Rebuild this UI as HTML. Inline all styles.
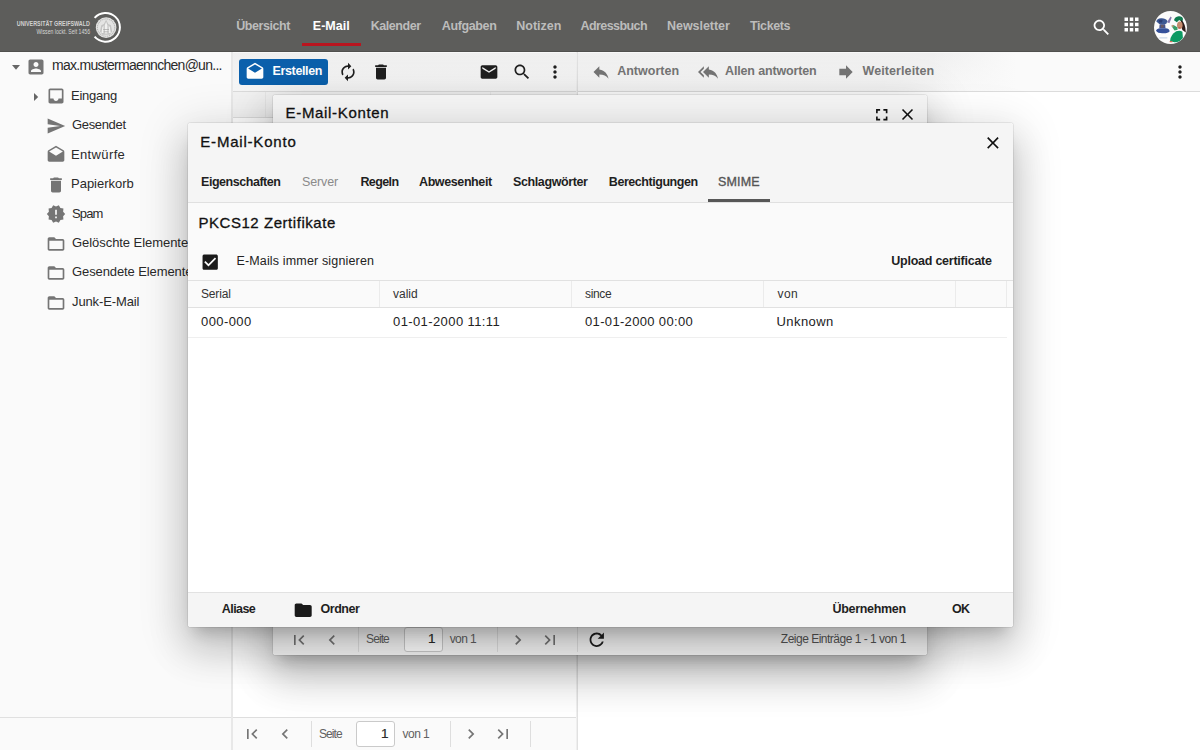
<!DOCTYPE html>
<html lang="de">
<head>
<meta charset="utf-8">
<title>E-Mail - Group-Office</title>
<style>
*{box-sizing:border-box;margin:0;padding:0}
html,body{width:1200px;height:750px;overflow:hidden;background:#fff}
body{position:relative;font-family:"Liberation Sans", sans-serif;font-size:13px;color:#212121;-webkit-font-smoothing:antialiased}
.abs,.t,.ic{position:absolute}
.t{white-space:nowrap;display:block;font-weight:400;font-style:normal}
.ic{display:block;overflow:visible}
ul{list-style:none}
a{color:inherit;text-decoration:none}
#hdr{position:absolute;left:0;top:0;width:1200px;height:52px;background:#5d5d5b;overflow:hidden;border-bottom:1px solid #50504e}
#side{position:absolute;left:0;top:52px;width:233px;height:698px;background:#fafafa;border-right:2px solid #e8e8e8}
#side .foot{position:absolute;left:0;top:665px;width:231px;height:33px;border-top:1px solid #e0e0e0}
#center{position:absolute;left:233px;top:52px;width:343px;height:698px;background:#fff}
#vsplit{position:absolute;left:576px;top:52px;width:2px;height:698px;background:linear-gradient(to right,#efefef 0,#efefef 1px,#e1e1e1 1px,#e1e1e1 2px)}
#right{position:absolute;left:578px;top:52px;width:622px;height:698px;background:#fff}
.tb{position:absolute;left:0;top:0;width:100%;height:40px;background:linear-gradient(to bottom,#efefef,#f7f7f7);border-bottom:1px solid #dcdcdc;border-top:1px solid #f8f8f8}
#right .tb{background:linear-gradient(to right,rgba(250,250,250,0) 354px,#fafafa 439px),linear-gradient(to bottom,#efefef,#f7f7f7)}
.sep{position:absolute;width:1px;background:#dedede}
.shadow{box-shadow:0 0 0 1px rgba(0,0,0,.07),0 11px 15px -7px rgba(0,0,0,.2),0 24px 38px 3px rgba(0,0,0,.14),0 9px 46px 8px rgba(0,0,0,.12)}
#win1{position:absolute;left:272.5px;top:95px;width:654.5px;height:560px;background:#fff;border-radius:3px;overflow:hidden}
#win1w{position:absolute;left:272.5px;top:95px;width:654.5px;height:560px;border-radius:3px}
#win2w{position:absolute;left:187.5px;top:123px;width:825px;height:503.5px;border-radius:3px}
#win2{position:absolute;left:187.5px;top:123px;width:825px;height:503.5px;background:#fff;border-radius:3px;overflow:hidden}
</style>
</head>
<body>
<header id="hdr">
<svg class="abs" style="left:0;top:0" width="140" height="52" viewBox="0 0 140 52"><text x="16.8" y="25.8" font-size="7.2" font-weight="700" fill="#d2d2d1" textLength="73" lengthAdjust="spacingAndGlyphs" font-family='"Liberation Sans",sans-serif'>UNIVERSITÄT GREIFSWALD</text><text x="36.5" y="33.6" font-size="6.4" fill="#d6d6d5" textLength="53.5" lengthAdjust="spacingAndGlyphs" font-family='"Liberation Sans",sans-serif'>Wissen lockt. Seit 1456</text><path d="M94.6 17.9 A14.4 14.4 0 1 1 94.6 36.7" fill="none" stroke="#fff" stroke-width="2"/><circle cx="106.1" cy="27.6" r="10.3" fill="#e4e4e3"/><circle cx="106.1" cy="27.6" r="8.7" fill="none" stroke="#b9b9b8" stroke-width="1.1" stroke-dasharray="1.2 0.7"/><path d="M106.1 19.8 l2.2 4.2 2.6 1.2 1.3 6.300 -2.400 3.300 h-7.400 l-2.400-3.300 1.300-6.300 2.600-1.200z" fill="#c4c4c3"/><path d="M106.1 21.8 l1.300 3.400 v8.300 h-2.600 v-8.300z M102.300 27.200 l1.200-1.700 v7.500 h-2z M109.900 27.200 l-1.200-1.700 v7.500 h2z" fill="#f1f1f0"/><path d="M103.200 29.500 h5.800 M103.600 31.800 h5" stroke="#a5a5a4" stroke-width=".7"/></svg>
<nav>
<a class="t" style="left:236.30px;top:19.75px;font-size:12.5px;line-height:12.5px;font-weight:700;color:#bcbcbb;letter-spacing:-0.449px;">Übersicht</a>
<a class="t" style="left:312.80px;top:19.75px;font-size:12.5px;line-height:12.5px;font-weight:700;color:#ffffff;letter-spacing:0.013px;">E-Mail</a>
<a class="t" style="left:370.80px;top:19.75px;font-size:12.5px;line-height:12.5px;font-weight:700;color:#bcbcbb;letter-spacing:-0.461px;">Kalender</a>
<a class="t" style="left:441.80px;top:19.75px;font-size:12.5px;line-height:12.5px;font-weight:700;color:#bcbcbb;letter-spacing:-0.371px;">Aufgaben</a>
<a class="t" style="left:516.30px;top:19.75px;font-size:12.5px;line-height:12.5px;font-weight:700;color:#bcbcbb;letter-spacing:-0.017px;">Notizen</a>
<a class="t" style="left:580.50px;top:19.75px;font-size:12.5px;line-height:12.5px;font-weight:700;color:#bcbcbb;letter-spacing:-0.567px;">Adressbuch</a>
<a class="t" style="left:667.00px;top:19.75px;font-size:12.5px;line-height:12.5px;font-weight:700;color:#bcbcbb;letter-spacing:-0.040px;">Newsletter</a>
<a class="t" style="left:750.00px;top:19.75px;font-size:12.5px;line-height:12.5px;font-weight:700;color:#bcbcbb;letter-spacing:-0.400px;">Tickets</a>
<div class="abs" style="left:302px;top:43.3px;width:59px;height:2.7px;background:#b9151f"></div>
</nav>
<svg class="ic" style="left:1091.10px;top:17.10px;width:21px;height:21px;fill:#fff;" viewBox="0 0 24 24"><path d="M15.5 14h-.79l-.28-.27C15.41 12.59 16 11.11 16 9.5 16 5.91 13.09 3 9.5 3S3 5.91 3 9.5 5.91 16 9.5 16c1.61 0 3.09-.59 4.23-1.57l.27.28v.79l5 4.99L20.49 19l-4.99-5zm-6 0C7.01 14 5 11.99 5 9.5S7.01 5 9.5 5 14 7.01 14 9.5 11.99 14 9.5 14z"/></svg>
<svg class="ic" style="left:1120.50px;top:14.40px;width:21px;height:21px;fill:#fff;" viewBox="0 0 24 24"><path d="M4 8h4V4H4v4zm6 12h4v-4h-4v4zm-6 0h4v-4H4v4zm0-6h4v-4H4v4zm6 0h4v-4h-4v4zm6-10v4h4V4h-4zm-6 4h4V4h-4v4zm6 6h4v-4h-4v4zm0 6h4v-4h-4v4z"/></svg>
<svg class="abs" style="left:1154px;top:11px" width="33" height="33" viewBox="0 0 33 33"><defs><clipPath id="avc"><circle cx="16.5" cy="16.5" r="16.5"/></clipPath></defs><g clip-path="url(#avc)"><rect width="33" height="33" fill="#fcfcfc"/><path d="M13 11.200 L16.600 5.600 l1.100 1 -2.300 5.600z" fill="#8577ad"/><path d="M2.300 10.500 q.5-3 4.700-3.200 q4.500-.3 6.500 2.700 l-1.200 2.800 q-3 1.200-7 .3z" fill="#3d5893"/><path d="M4.500 9.500 q2-1.200 4.200-.2 l-.8 2.200 h-2.600z" fill="#2b3c73"/><path d="M5.600 13.200 h5.600 l.3 4 h-6.200z" fill="#47528a"/><path d="M7 14 h2.600 v2.400 h-2.600z" fill="#6a5a5e"/><path d="M2 19.800 q.8-2.800 4.800-2.600 h4.800 q3.600.2 4.100 3 q-1.800 2.300-6.800 2.100 q-5.200.200-6.900-2.500z" fill="#34509a"/><path d="M5.300 26.200 h8 v1.400 h-8z" fill="#cbd8e9"/><path d="M20 9.300 q.6-3.400 4.700-4 q3.700-.3 4.300 2.800 l-.6 3.200 -3.200-2.400 -2.400 2.400z" fill="#107b50"/><path d="M27.200 8.800 q4.300 3.600 4.600 12.600 l-3.400-2.400 -1.800-5.600z" fill="#2d1b19"/><ellipse cx="25.800" cy="14.200" rx="2.800" ry="3.800" fill="#c58b6d"/><path d="M24.400 16.500 h2 v.8 h-2z" fill="#b5413c"/><path d="M17.500 15 l2-1 3.800 2.200 .4 2.600 -3.200.6z" fill="#3a9d68"/><path d="M17.300 14.600 l1.600-.9 1 1.600 -1.500.8z" fill="#d09a7c"/><path d="M22.200 20.300 q3.600-1.400 6.200.4 l.5 6.300 q-3 4.200-8.200 4.300 l-4.700-1.100 q.4-6.500 6.200-9.900z" fill="#0d9a63"/><path d="M15.700 30 h2.600 v1.300 h-2.600z" fill="#d4705a"/></g></svg>
</header>
<aside id="side"><div class="foot"></div></aside>
<ul>
<li>
<svg class="ic" style="left:12.2px;top:64.8px;width:8px;height:4.7px;fill:#666" viewBox="0 0 8 4.7"><path d="M0 0h8L4 4.700z"/></svg>
<svg class="ic" style="left:26.10px;top:56.90px;width:20px;height:20px;fill:#757575;" viewBox="0 0 24 24"><path d="M3 5v14c0 1.100.89 2 2 2h14c1.100 0 2-.9 2-2V5c0-1.100-.9-2-2-2H5c-1.110 0-2 .9-2 2zm12 4c0 1.660-1.340 3-3 3s-3-1.340-3-3 1.340-3 3-3 3 1.340 3 3zm-9 8c0-2 4-3.100 6-3.100s6 1.100 6 3.100v1H6v-1z"/></svg>
<span class="t" style="left:52.00px;top:58.00px;font-size:14px;line-height:14px;color:#2a2a2a;letter-spacing:-0.719px;">max.mustermaennchen@un...</span>
</li>
<li>
<svg class="ic" style="left:33.6px;top:93px;width:4.2px;height:8px;fill:#666" viewBox="0 0 4.2 8"><path d="M0 0v8l4.200-4z"/></svg>
<svg class="ic" style="left:45.80px;top:86.45px;width:20px;height:20px;fill:#757575;" viewBox="0 0 24 24"><path d="M19 3H4.990c-1.110 0-1.980.9-1.980 2L3 19c0 1.100.88 2 1.990 2H19c1.100 0 2-.9 2-2V5c0-1.100-.9-2-2-2zm0 12h-4c0 1.660-1.350 3-3 3s-3-1.340-3-3H4.990V5H19v10z"/></svg>
<span class="t" style="left:71.00px;top:89.00px;font-size:13px;line-height:13px;color:#2a2a2a;letter-spacing:-0.247px;">Eingang</span>
</li>
<li>
<svg class="ic" style="left:45.80px;top:115.90px;width:20px;height:20px;fill:#757575;" viewBox="0 0 24 24"><path d="M2.010 21L23 12 2.010 3 2 10l15 2-15 2z"/></svg>
<span class="t" style="left:72.00px;top:118.00px;font-size:13px;line-height:13px;color:#2a2a2a;letter-spacing:-0.337px;">Gesendet</span>
</li>
<li>
<svg class="ic" style="left:45.80px;top:145.35px;width:20px;height:20px;fill:#757575;" viewBox="0 0 24 24"><path d="M21.99 8c0-.72-.37-1.35-.94-1.7L12 1 2.95 6.3C2.38 6.65 2 7.28 2 8v10c0 1.1.9 2 2 2h16c1.1 0 2-.9 2-2l-.01-10zM12 13L3.74 7.84 12 3l8.26 4.84L12 13z"/></svg>
<span class="t" style="left:71.00px;top:148.00px;font-size:13px;line-height:13px;color:#2a2a2a;letter-spacing:0.361px;">Entwürfe</span>
</li>
<li>
<svg class="ic" style="left:45.80px;top:174.80px;width:20px;height:20px;fill:#757575;" viewBox="0 0 24 24"><path d="M6 19c0 1.1.9 2 2 2h8c1.1 0 2-.9 2-2V7H6v12zM19 4h-3.5l-1-1h-5l-1 1H5v2h14V4z"/></svg>
<span class="t" style="left:71.00px;top:177.00px;font-size:13px;line-height:13px;color:#2a2a2a;letter-spacing:-0.004px;">Papierkorb</span>
</li>
<li>
<svg class="ic" style="left:45.80px;top:204.25px;width:20px;height:20px;fill:#757575;" viewBox="0 0 24 24"><path d="M23 12l-2.440-2.780.34-3.680-3.610-.82-1.890-3.180L12 3 8.600 1.540 6.710 4.720l-3.610.81.34 3.680L1 12l2.440 2.780-.34 3.690 3.610.82 1.890 3.180L12 21l3.400 1.460 1.890-3.180 3.610-.82-.34-3.680L23 12zm-10 5h-2v-2h2v2zm0-4h-2V7h2v6z"/></svg>
<span class="t" style="left:72.00px;top:207.00px;font-size:13px;line-height:13px;color:#2a2a2a;letter-spacing:-0.844px;">Spam</span>
</li>
<li>
<svg class="ic" style="left:45.80px;top:233.70px;width:20px;height:20px;fill:#757575;" viewBox="0 0 24 24"><path d="M20 6h-8l-2-2H4c-1.100 0-1.990.9-1.990 2L2 18c0 1.100.9 2 2 2h16c1.100 0 2-.9 2-2V8c0-1.100-.9-2-2-2zm0 12H4V8h16v10z"/></svg>
<span class="t" style="left:72.00px;top:236.00px;font-size:13px;line-height:13px;color:#2a2a2a;letter-spacing:-0.055px;">Gelöschte Elemente</span>
</li>
<li>
<svg class="ic" style="left:45.80px;top:263.15px;width:20px;height:20px;fill:#757575;" viewBox="0 0 24 24"><path d="M20 6h-8l-2-2H4c-1.100 0-1.990.9-1.990 2L2 18c0 1.100.9 2 2 2h16c1.100 0 2-.9 2-2V8c0-1.100-.9-2-2-2zm0 12H4V8h16v10z"/></svg>
<span class="t" style="left:72.00px;top:265.00px;font-size:13px;line-height:13px;color:#2a2a2a;letter-spacing:-0.100px;">Gesendete Elemente</span>
</li>
<li>
<svg class="ic" style="left:45.80px;top:292.60px;width:20px;height:20px;fill:#757575;" viewBox="0 0 24 24"><path d="M20 6h-8l-2-2H4c-1.100 0-1.990.9-1.990 2L2 18c0 1.100.9 2 2 2h16c1.100 0 2-.9 2-2V8c0-1.100-.9-2-2-2zm0 12H4V8h16v10z"/></svg>
<span class="t" style="left:72.00px;top:295.00px;font-size:13px;line-height:13px;color:#2a2a2a;letter-spacing:-0.114px;">Junk-E-Mail</span>
</li>
</ul>
<section id="center"><div class="tb"></div><div class="abs" style="left:0;top:40px;width:343px;height:26px;background:#f3f3f3;border-bottom:1px solid #dedede"></div><div class="sep" style="left:31.500px;top:40px;height:25px;background:#e9e9e9"></div><div class="sep" style="left:257px;top:40px;height:25px;background:#e9e9e9"></div><div class="abs" style="left:0;top:665px;width:343px;height:33px;background:#fafafa;border-top:1px solid #dedede"></div></section>
<div role="toolbar" aria-label="E-Mail">
<div class="abs" style="left:239px;top:59px;width:89px;height:26px;background:#0b60ac;border-radius:3px"></div>
<svg class="ic" style="left:245.30px;top:62.20px;width:20px;height:20px;fill:#fff;" viewBox="0 0 24 24"><path d="M21.99 8c0-.72-.37-1.35-.94-1.7L12 1 2.95 6.3C2.38 6.65 2 7.28 2 8v10c0 1.1.9 2 2 2h16c1.1 0 2-.9 2-2l-.01-10zM12 13L3.74 7.84 12 3l8.26 4.84L12 13z"/></svg>
<span class="t" style="left:272.60px;top:64.75px;font-size:12.5px;line-height:12.5px;font-weight:700;color:#fff;letter-spacing:-0.383px;">Erstellen</span>
<svg class="ic" style="left:338.20px;top:61.60px;width:20px;height:20px;fill:#1f1f1f;" viewBox="0 0 24 24"><path d="M12 6v3l4-4-4-4v3c-4.42 0-8 3.58-8 8 0 1.57.46 3.03 1.24 4.26L6.7 14.8c-.45-.83-.7-1.79-.7-2.8 0-3.31 2.69-6 6-6zm6.76 1.74L17.3 9.2c.44.84.7 1.79.7 2.8 0 3.31-2.69 6-6 6v-3l-4 4 4 4v-3c4.42 0 8-3.58 8-8 0-1.57-.46-3.03-1.24-4.26z"/></svg>
<svg class="ic" style="left:370.70px;top:61.60px;width:20px;height:20px;fill:#1f1f1f;" viewBox="0 0 24 24"><path d="M6 19c0 1.1.9 2 2 2h8c1.1 0 2-.9 2-2V7H6v12zM19 4h-3.5l-1-1h-5l-1 1H5v2h14V4z"/></svg>
<svg class="ic" style="left:479.40px;top:61.50px;width:20px;height:20px;fill:#1f1f1f;" viewBox="0 0 24 24"><path d="M20 4H4c-1.1 0-1.99.9-1.99 2L2 18c0 1.1.9 2 2 2h16c1.1 0 2-.9 2-2V6c0-1.1-.9-2-2-2zm0 4l-8 5-8-5V6l8 5 8-5v2z"/></svg>
<svg class="ic" style="left:512.20px;top:61.70px;width:20px;height:20px;fill:#1f1f1f;" viewBox="0 0 24 24"><path d="M15.5 14h-.79l-.28-.27C15.41 12.59 16 11.11 16 9.5 16 5.91 13.09 3 9.5 3S3 5.91 3 9.5 5.91 16 9.5 16c1.61 0 3.09-.59 4.23-1.57l.27.28v.79l5 4.99L20.49 19l-4.99-5zm-6 0C7.01 14 5 11.99 5 9.5S7.01 5 9.5 5 14 7.01 14 9.5 11.99 14 9.5 14z"/></svg>
<svg class="ic" style="left:545.00px;top:61.80px;width:20px;height:20px;fill:#1f1f1f;" viewBox="0 0 24 24"><path d="M12 8c1.1 0 2-.9 2-2s-.9-2-2-2-2 .9-2 2 .9 2 2 2zm0 2c-1.1 0-2 .9-2 2s.9 2 2 2 2-.9 2-2-.9-2-2-2zm0 6c-1.1 0-2 .9-2 2s.9 2 2 2 2-.9 2-2-.9-2-2-2z"/></svg>
</div>
<svg class="ic" style="left:241.80px;top:724.30px;width:20px;height:20px;fill:#757575;" viewBox="0 0 24 24"><path d="M18.410 16.590L13.820 12l4.590-4.590L17 6l-6 6 6 6zM6 6h2v12H6z"/></svg><svg class="ic" style="left:275.10px;top:724.30px;width:20px;height:20px;fill:#757575;" viewBox="0 0 24 24"><path d="M15.410 7.410L14 6l-6 6 6 6 1.410-1.410L10.830 12z"/></svg><div class="sep" style="left:310.8px;top:720.9px;height:26px"></div><span class="t" style="left:319.00px;top:728.00px;font-size:12px;line-height:12px;color:#616161;letter-spacing:-0.919px;">Seite</span><div class="abs" style="left:356.4px;top:721.4px;width:39px;height:25.5px;border:1px solid #cacaca;border-radius:3px;background:#fff"></div><span class="t" style="left:380.90px;top:726.75px;font-size:13.5px;line-height:13.5px;color:#2b2b2b;-webkit-text-stroke:0.2px #2b2b2b;">1</span><span class="t" style="left:402.60px;top:728.00px;font-size:12px;line-height:12px;color:#616161;letter-spacing:-0.570px;">von 1</span><div class="sep" style="left:450.1px;top:720.9px;height:26px"></div><svg class="ic" style="left:460.80px;top:724.30px;width:20px;height:20px;fill:#757575;" viewBox="0 0 24 24"><path d="M10 6L8.590 7.410 13.170 12l-4.580 4.590L10 18l6-6z"/></svg><svg class="ic" style="left:493.10px;top:724.30px;width:20px;height:20px;fill:#757575;" viewBox="0 0 24 24"><path d="M5.590 7.410L10.180 12l-4.590 4.590L7 18l6-6-6-6zM16 6h2v12h-2z"/></svg><div class="sep" style="left:529.9px;top:720.9px;height:26px"></div>
<section id="right"><div class="tb"></div></section><div id="vsplit"></div>
<svg class="ic" style="left:591.00px;top:62.00px;width:20px;height:20px;fill:#757575;" viewBox="0 0 24 24"><path d="M10 9V5l-7 7 7 7v-4.1c5 0 8.500 1.600 11 5.100-1-5-4-10-11-11z"/></svg>
<span class="t" style="left:617.20px;top:64.75px;font-size:12.5px;line-height:12.5px;font-weight:700;color:#757575;letter-spacing:0.005px;">Antworten</span>
<svg class="ic" style="left:698.00px;top:62.00px;width:20px;height:20px;fill:#757575;" viewBox="0 0 24 24"><path d="M7 8V5l-7 7 7 7v-3l-4-4 4-4zm6 1V5l-7 7 7 7v-4.1c5 0 8.500 1.600 11 5.100-1-5-4-10-11-11z"/></svg>
<span class="t" style="left:725.00px;top:64.75px;font-size:12.5px;line-height:12.5px;font-weight:700;color:#757575;letter-spacing:-0.151px;">Allen antworten</span>
<svg class="ic" style="left:836.00px;top:62.00px;width:20px;height:20px;fill:#757575;" viewBox="0 0 24 24"><path d="M12 8V4l8 8-8 8v-4H4V8z"/></svg>
<span class="t" style="left:862.60px;top:64.75px;font-size:12.5px;line-height:12.5px;font-weight:700;color:#757575;letter-spacing:0.083px;">Weiterleiten</span>
<svg class="ic" style="left:1170.00px;top:61.80px;width:20px;height:20px;fill:#1f1f1f;" viewBox="0 0 24 24"><path d="M12 8c1.1 0 2-.9 2-2s-.9-2-2-2-2 .9-2 2 .9 2 2 2zm0 2c-1.1 0-2 .9-2 2s.9 2 2 2 2-.9 2-2-.9-2-2-2zm0 6c-1.1 0-2 .9-2 2s.9 2 2 2 2-.9 2-2-.9-2-2-2z"/></svg>
<div role="dialog" aria-label="E-Mail-Konten">
<div id="win1w" class="shadow"></div>
<div id="win1"><div class="abs" style="left:0;top:0;width:100%;height:40px;background:#f5f5f5"></div><div class="abs" style="left:0;top:527px;width:100%;height:33px;background:#f5f5f5;border-top:1px solid #e0e0e0"></div></div>
<h2 class="t" style="left:285.60px;top:105.00px;font-size:15px;line-height:15px;color:#111;-webkit-text-stroke:0.3px #111;letter-spacing:0.667px;">E-Mail-Konten</h2>
<svg class="ic" style="left:871.65px;top:105.15px;width:19.5px;height:19.5px;fill:#111;" viewBox="0 0 24 24"><path d="M7 14H5v5h5v-2H7v-3zm-2-4h2V7h3V5H5v5zm12 7h-3v2h5v-5h-2v3zM14 5v2h3v3h2V5h-5z"/></svg>
<svg class="ic" style="left:898.00px;top:105.40px;width:19px;height:19px;fill:#111;" viewBox="0 0 24 24"><path d="M19 6.410L17.590 5 12 10.590 6.410 5 5 6.410 10.590 12 5 17.590 6.410 19 12 13.410 17.590 19 19 17.590 13.410 12z"/></svg>
<svg class="ic" style="left:288.90px;top:629.80px;width:20px;height:20px;fill:#757575;" viewBox="0 0 24 24"><path d="M18.410 16.590L13.820 12l4.590-4.590L17 6l-6 6 6 6zM6 6h2v12H6z"/></svg><svg class="ic" style="left:322.20px;top:629.80px;width:20px;height:20px;fill:#757575;" viewBox="0 0 24 24"><path d="M15.410 7.410L14 6l-6 6 6 6 1.410-1.410L10.830 12z"/></svg><div class="sep" style="left:357.5px;top:626.4px;height:26px"></div><span class="t" style="left:366.10px;top:633.00px;font-size:12px;line-height:12px;color:#616161;letter-spacing:-0.919px;">Seite</span><div class="abs" style="left:403.5px;top:626.9px;width:39px;height:25.5px;border:1px solid #cacaca;border-radius:3px;background:#fff"></div><span class="t" style="left:428.00px;top:631.75px;font-size:13.5px;line-height:13.5px;color:#2b2b2b;-webkit-text-stroke:0.2px #2b2b2b;">1</span><span class="t" style="left:449.70px;top:633.00px;font-size:12px;line-height:12px;color:#616161;letter-spacing:-0.570px;">von 1</span><div class="sep" style="left:496.8px;top:626.4px;height:26px"></div><svg class="ic" style="left:507.90px;top:629.80px;width:20px;height:20px;fill:#757575;" viewBox="0 0 24 24"><path d="M10 6L8.590 7.410 13.170 12l-4.580 4.590L10 18l6-6z"/></svg><svg class="ic" style="left:540.20px;top:629.80px;width:20px;height:20px;fill:#757575;" viewBox="0 0 24 24"><path d="M5.590 7.410L10.180 12l-4.590 4.590L7 18l6-6-6-6zM16 6h2v12h-2z"/></svg><div class="sep" style="left:576.6px;top:626.4px;height:26px"></div>
<svg class="ic" style="left:586.45px;top:629.05px;width:21.5px;height:21.5px;fill:#1f1f1f;" viewBox="0 0 24 24"><path d="M17.650 6.350C16.200 4.900 14.210 4 12 4c-4.420 0-7.990 3.580-7.990 8s3.570 8 7.990 8c3.730 0 6.840-2.550 7.730-6h-2.080c-.82 2.330-3.040 4-5.650 4-3.310 0-6-2.690-6-6s2.690-6 6-6c1.660 0 3.140.69 4.220 1.780L13 11h7V4l-2.350 2.350z"/></svg>
<span class="t" style="left:780.80px;top:633.00px;font-size:12px;line-height:12px;color:#555;letter-spacing:-0.496px;">Zeige Einträge 1 - 1 von 1</span>
</div>
<div role="dialog" aria-modal="true" aria-label="E-Mail-Konto">
<div id="win2w" class="shadow"></div>
<div id="win2"><div class="abs" style="left:0;top:0;width:100%;height:79.5px;background:#f5f5f5;border-bottom:1px solid #e0e0e0"></div><div class="abs" style="left:0;top:79.5px;width:100%;height:78px;background:#fafafa"></div><div class="abs" style="left:0;top:157px;width:100%;height:27.5px;background:#fafafa;border-top:1px solid #e1e1e1;border-bottom:1px solid #e1e1e1"></div><div class="abs" style="left:0;top:214px;width:819px;height:1px;background:#efefef"></div><div class="abs" style="left:0;top:469px;width:100%;height:34.5px;background:#f5f5f5;border-top:1px solid #e2e2e2"></div></div>
<h2 class="t" style="left:200.30px;top:134.00px;font-size:15px;line-height:15px;color:#111;-webkit-text-stroke:0.3px #111;letter-spacing:0.795px;">E-Mail-Konto</h2>
<svg class="ic" style="left:983.10px;top:133.10px;width:19.8px;height:19.8px;fill:#111;" viewBox="0 0 24 24"><path d="M19 6.410L17.590 5 12 10.590 6.410 5 5 6.410 10.590 12 5 17.590 6.410 19 12 13.410 17.590 19 19 17.590 13.410 12z"/></svg>
<a class="t" style="left:201.00px;top:175.75px;font-size:12.5px;line-height:12.5px;font-weight:700;color:#1f1f1f;letter-spacing:-0.458px;">Eigenschaften</a>
<a class="t" style="left:302.00px;top:175.75px;font-size:12.5px;line-height:12.5px;color:#8a8a8a;letter-spacing:-0.131px;">Server</a>
<a class="t" style="left:360.40px;top:175.75px;font-size:12.5px;line-height:12.5px;font-weight:700;color:#1f1f1f;letter-spacing:-0.608px;">Regeln</a>
<a class="t" style="left:419.00px;top:175.75px;font-size:12.5px;line-height:12.5px;font-weight:700;color:#1f1f1f;letter-spacing:-0.394px;">Abwesenheit</a>
<a class="t" style="left:513.00px;top:175.75px;font-size:12.5px;line-height:12.5px;font-weight:700;color:#1f1f1f;letter-spacing:-0.393px;">Schlagwörter</a>
<a class="t" style="left:608.80px;top:175.75px;font-size:12.5px;line-height:12.5px;font-weight:700;color:#1f1f1f;letter-spacing:-0.447px;">Berechtigungen</a>
<a class="t" style="left:718.00px;top:175.75px;font-size:12.5px;line-height:12.5px;color:#555;-webkit-text-stroke:0.35px #555;letter-spacing:0.166px;">SMIME</a>
<div class="abs" style="left:708px;top:198.5px;width:61.500px;height:3px;background:#575757"></div>
<h3 class="t" style="left:198.40px;top:215.00px;font-size:15px;line-height:15px;color:#111;-webkit-text-stroke:0.3px #111;letter-spacing:0.552px;">PKCS12 Zertifikate</h3>
<svg class="ic" style="left:200.20px;top:251.80px;width:20.4px;height:20.4px;fill:#1a1a1a;" viewBox="0 0 24 24"><path d="M19 3H5c-1.110 0-2 .9-2 2v14c0 1.100.89 2 2 2h14c1.110 0 2-.9 2-2V5c0-1.100-.89-2-2-2zm-9 14l-5-5 1.410-1.410L10 14.170l7.590-7.590L19 8l-9 9z"/></svg>
<span class="t" style="left:236.40px;top:254.75px;font-size:12.5px;line-height:12.5px;color:#222;letter-spacing:0.159px;">E-Mails immer signieren</span>
<span class="t" style="left:891.30px;top:254.75px;font-size:12.5px;line-height:12.5px;font-weight:700;color:#1f1f1f;letter-spacing:-0.249px;">Upload certificate</span>
<div class="sep" style="left:379.0px;top:281px;height:26px;background:#ebebeb"></div>
<div class="sep" style="left:571.0px;top:281px;height:26px;background:#ebebeb"></div>
<div class="sep" style="left:763.0px;top:281px;height:26px;background:#ebebeb"></div>
<div class="sep" style="left:955.0px;top:281px;height:26px;background:#ebebeb"></div>
<div class="sep" style="left:1005.8px;top:281px;height:26px;background:#ebebeb"></div>
<span class="t" style="left:201.00px;top:288.00px;font-size:12px;line-height:12px;color:#333;letter-spacing:-0.163px;">Serial</span>
<span class="t" style="left:393.00px;top:288.00px;font-size:12px;line-height:12px;color:#333;">valid</span>
<span class="t" style="left:585.00px;top:288.00px;font-size:12px;line-height:12px;color:#333;letter-spacing:-0.335px;">since</span>
<span class="t" style="left:777.50px;top:288.00px;font-size:12px;line-height:12px;color:#333;letter-spacing:0.413px;">von</span>
<span class="t" style="left:201.00px;top:315.00px;font-size:13px;line-height:13px;color:#222;letter-spacing:0.420px;">000-000</span>
<span class="t" style="left:393.00px;top:315.00px;font-size:13px;line-height:13px;color:#222;letter-spacing:0.401px;">01-01-2000 11:11</span>
<span class="t" style="left:585.00px;top:315.00px;font-size:13px;line-height:13px;color:#222;letter-spacing:0.339px;">01-01-2000 00:00</span>
<span class="t" style="left:776.50px;top:315.00px;font-size:13px;line-height:13px;color:#222;letter-spacing:0.422px;">Unknown</span>
<span class="t" style="left:221.80px;top:602.75px;font-size:12.5px;line-height:12.5px;font-weight:700;color:#1f1f1f;letter-spacing:-0.575px;">Aliase</span>
<svg class="ic" style="left:293.30px;top:599.60px;width:20.4px;height:20.4px;fill:#1a1a1a;" viewBox="0 0 24 24"><path d="M10 4H4c-1.100 0-1.990.9-1.990 2L2 18c0 1.100.9 2 2 2h16c1.100 0 2-.9 2-2V8c0-1.100-.9-2-2-2h-8l-2-2z"/></svg>
<span class="t" style="left:320.50px;top:602.75px;font-size:12.5px;line-height:12.5px;font-weight:700;color:#1f1f1f;letter-spacing:-0.462px;">Ordner</span>
<span class="t" style="left:832.50px;top:602.75px;font-size:12.5px;line-height:12.5px;font-weight:700;color:#1f1f1f;letter-spacing:-0.308px;">Übernehmen</span>
<span class="t" style="left:952.00px;top:602.75px;font-size:12.5px;line-height:12.5px;font-weight:700;color:#1f1f1f;letter-spacing:-0.723px;">OK</span>
</div>
</body>
</html>
